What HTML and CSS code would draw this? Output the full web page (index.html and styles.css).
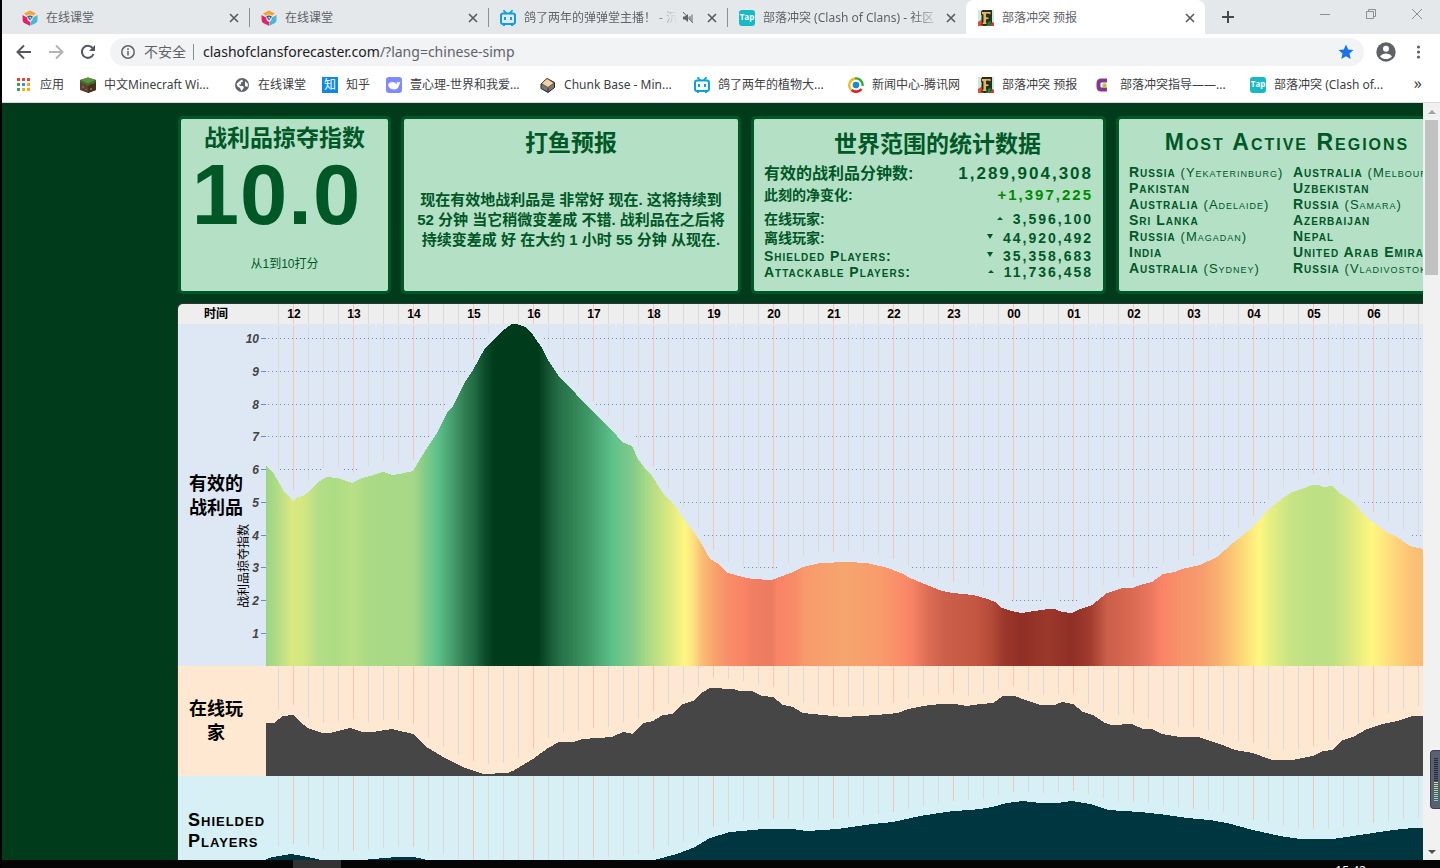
FILE: index.html
```html
<!DOCTYPE html>
<html lang="zh-CN">
<head>
<meta charset="utf-8">
<title>部落冲突 预报</title>
<link rel="stylesheet" href="styles.css">
</head>
<body>
<svg class="sprites" aria-hidden="true">
  <symbol id="cube" viewBox="0 0 16 16">
    <path d="M2 3.5 8 0.5l6 3-2.8 2L8 4.3 4.8 5.7z" fill="#f9a12b"/>
    <path d="M0.5 5 5 7.5l.8 3L8 12v3.8L2.200 13Q.6 12 .6 10z" fill="#ea1f63"/>
    <path d="M15.500 5 11 7.500l-.8 3L8.300 12v3.800L14 13q1.500-1 1.500-3z" fill="#4db5d8"/>
    <path d="M5 6.500 8 5.300l3 1.200L8 10.500z" fill="#37678c"/>
    <path d="M7.200 7.200h2L8.200 9z" fill="#fff"/>
  </symbol>
  <symbol id="bili" viewBox="0 0 16 16">
    <path d="M4 .8 6 3M12 .8 10 3" stroke="#0aa1dc" stroke-width="1.800" stroke-linecap="round"/>
    <rect x="1" y="3.500" width="14" height="10.500" rx="2" fill="none" stroke="#0aa1dc" stroke-width="2"/>
    <path d="M5 7v3M11 7v3" stroke="#0aa1dc" stroke-width="2"/>
    <path d="M3 15.500h2M11 15.500h2" stroke="#0aa1dc"/>
  </symbol>
  <symbol id="forecast" viewBox="0 0 16 16">
    <rect width="16" height="16" fill="#cfe6e2"/>
    <path d="M4 0h10v16H3z" fill="#123b25"/>
    <path d="M0 12l3-2 2 6H0z" fill="#e2492f"/>
    <path d="M12 16l2-4 2 1v3z" fill="#d8382a"/>
    <path d="M10 12l3-1-1 5H8z" fill="#1b8a3c"/>
    <path d="M3.500 1.500H13V5L10.500 4H8.500v3H11v2.500H8.500v3l1 2H3.500L5 12V4.500L3.500 5z" fill="#e9b45b" stroke="#1d1b10" stroke-width=".8"/>
  </symbol>
</svg>

<header class="browser">
  <div class="tabs">
    <div class="tab"><svg class="fav"><use href="#cube"/></svg><span class="tab-title">在线课堂</span><button class="close" aria-label="关闭"><svg viewBox="0 0 10 10"><path d="M1 1l8 8M9 1l-8 8"/></svg></button></div>
    <div class="tab"><svg class="fav"><use href="#cube"/></svg><span class="tab-title">在线课堂</span><button class="close" aria-label="关闭"><svg viewBox="0 0 10 10"><path d="M1 1l8 8M9 1l-8 8"/></svg></button></div>
    <div class="tab"><svg class="fav"><use href="#bili"/></svg><span class="tab-title fade">鸽了两年的弹弹堂主播！ - 沉</span><svg class="mute" viewBox="0 0 12 12"><path d="M1 4.500h2L6 2v8L3 7.500H1z" fill="#5f6368"/><path d="M1 0l10 11M8 4v4M10 2.500v7" stroke="#5f6368" fill="none"/></svg><button class="close" aria-label="关闭"><svg viewBox="0 0 10 10"><path d="M1 1l8 8M9 1l-8 8"/></svg></button></div>
    <div class="tab"><span class="fav tap">Tap</span><span class="tab-title fade">部落冲突 (Clash of Clans) - 社区</span><button class="close" aria-label="关闭"><svg viewBox="0 0 10 10"><path d="M1 1l8 8M9 1l-8 8"/></svg></button></div>
    <div class="tab active"><svg class="fav"><use href="#forecast"/></svg><span class="tab-title">部落冲突 预报</span><button class="close" aria-label="关闭"><svg viewBox="0 0 10 10"><path d="M1 1l8 8M9 1l-8 8"/></svg></button></div>
    <button class="new-tab" aria-label="新标签页"><svg viewBox="0 0 12 12"><path d="M6 0v12M0 6h12"/></svg></button>
    <div class="window-buttons">
      <button aria-label="最小化"><svg viewBox="0 0 12 12"><path d="M1 6.500h10"/></svg></button>
      <button aria-label="还原"><svg viewBox="0 0 12 12"><path d="M1.500 3.500h7v7h-7zM3.500 3.500v-2h7v7h-2"/></svg></button>
      <button aria-label="关闭窗口"><svg viewBox="0 0 12 12"><path d="M1 1l10 10M11 1L1 11"/></svg></button>
    </div>
  </div>

  <div class="toolbar">
    <button class="nav" aria-label="后退"><svg viewBox="0 0 16 16"><path d="M15 8H2M8 1.500 1.500 8 8 14.500"/></svg></button>
    <button class="nav off" aria-label="前进"><svg viewBox="0 0 16 16"><path d="M1 8h13M8 1.500 14.500 8 8 14.500"/></svg></button>
    <button class="nav" aria-label="刷新"><svg viewBox="0 0 16 16"><path d="M13.500 10A6 6 0 1 1 12.500 4"/><path d="M15 1v6H9z" class="solid"/></svg></button>
    <div class="address">
      <svg class="info" viewBox="0 0 14 14"><circle cx="7" cy="7" r="6.200"/><path d="M7 6v4.500M7 3.300v1.600"/></svg>
      <span class="insecure">不安全</span>
      <span class="url">clashofclansforecaster.com<span>/?lang=chinese-simp</span></span>
      <svg class="star" viewBox="0 0 16 16"><path d="M8 .5l2.200 5 5.300.5-4 3.600 1.200 5.400L8 12.200 3.300 15l1.200-5.400-4-3.600 5.300-.5z" fill="#1a73e8"/></svg>
    </div>
    <svg class="profile" viewBox="0 0 20 20"><circle cx="10" cy="10" r="9.700" fill="#5f6368"/><circle cx="10" cy="6.800" r="3" fill="#fff"/><path d="M4 14.200Q6 11.500 10 11.500t6 2.700Q14 17 10 17t-6-2.800z" fill="#fff"/></svg>
    <svg class="menu" viewBox="0 0 4 16"><circle cx="2" cy="3" r="1.600"/><circle cx="2" cy="8" r="1.600"/><circle cx="2" cy="13" r="1.600"/></svg>
  </div>

  <nav class="bookmarks">
    <a href="#"><svg class="fav" viewBox="0 0 16 16"><path d="M1 1h3v3H1zM6 1h3v3H6zM11 1h3v3h-3z" fill="#ea4335"/><path d="M1 6h3v3H1zM1 11h3v3H1z" fill="#34a853"/><path d="M6 6h3v3H6z" fill="#4285f4"/><path d="M11 6h3v3h-3zM6 11h3v3H6zM11 11h3v3h-3z" fill="#fbab05"/></svg><span>应用</span></a>
    <a href="#"><svg class="fav" viewBox="0 0 16 16"><path d="M0 3 8 .5 16 3v10l-8 3-8-3z" fill="#5d4030"/><path d="M8 6v10l8-3V3z" fill="#48301f"/><path d="M0 3 8 .5 16 3 8 6.500z" fill="#5c9440"/><path d="M0 3l8 3.500L16 3v2l-2 1v1l-3 0-3 2-3-2-2 0v-1L0 5z" fill="#3f702c"/><path d="M2 9h2v2H2zM5 12h2v1H5zM10 11h2v2h-2z" fill="#80604a"/></svg><span class="long">中文Minecraft Wi...</span></a>
    <a href="#"><svg class="fav" viewBox="0 0 16 16"><circle cx="8" cy="8" r="7" fill="#5f6368"/><path d="M2.500 7 5 4.500 8 2.500l1 2-2 1v2H5l1 1.500h3l1 1.500L7.500 14 6 11 3.500 9.500zM11 4l3 3-.5 3-2.500-1z" fill="#fff"/></svg><span>在线课堂</span></a>
    <a href="#"><span class="fav zhi">知</span><span>知乎</span></a>
    <a href="#"><svg class="fav" viewBox="0 0 16 16"><rect width="16" height="16" rx="3" fill="#7d8cfa"/><path d="M2 8q1-3 4.500-3 3 0 5 2.500l-1-3 2 1 2-1-1.500 4Q12 12.500 8 12.500 3 12 2 8z" fill="#fff"/></svg><span class="long">壹心理-世界和我爱...</span></a>
    <a href="#"><svg class="fav" viewBox="0 0 16 16"><path d="M1 7 7 1.500l7.500 4v5L8 15.500 1 11.500z" fill="#777" stroke="#222"/><path d="M1.500 6.500 7 1.500l7 4.500-6 4.500z" fill="#f5cfa6" stroke="#4b392b" stroke-width=".7"/><path d="M8 11v4" stroke="#333"/></svg><span class="long">Chunk Base - Min...</span></a>
    <a href="#"><svg class="fav"><use href="#bili"/></svg><span class="long">鸽了两年的植物大...</span></a>
    <a href="#"><svg class="fav" viewBox="0 0 16 16"><circle cx="8" cy="8" r="3.300" fill="#1c8ad2"/><path d="M7 1.500A6.500 6.500 0 0 1 14.500 9" fill="none" stroke="#35a83a" stroke-width="2.400"/><path d="M13.500 12A7 7 0 0 1 3.500 13" fill="none" stroke="#e0202a" stroke-width="2.800"/><path d="M3 13A7 7 0 0 1 7 1.500" fill="none" stroke="#f4bd16" stroke-width="2.400"/></svg><span class="news">新闻中心-腾讯网</span></a>
    <a href="#"><svg class="fav"><use href="#forecast"/></svg><span class="mid">部落冲突 预报</span></a>
    <a href="#"><svg class="fav" viewBox="0 0 16 16"><path d="M11 3.500H5.500q-3 0-3 3v3q0 3 3 3H11" fill="none" stroke="#86368c" stroke-width="4"/><circle cx="8.500" cy="8.500" r="2.200" fill="#b5c736"/></svg><span class="long">部落冲突指导——...</span></a>
    <a href="#"><span class="fav tap">Tap</span><span class="long">部落冲突 (Clash of...</span></a>
    <button class="more" aria-label="更多书签">»</button>
  </nav>
</header>

<div class="viewport">
  <main class="page">
    <section class="cards">
      <article class="card score">
        <h2>战利品掠夺指数</h2>
        <p class="big">10.0</p>
        <p class="note">从1到10打分</p>
      </article>
      <article class="card forecast">
        <h2>打鱼预报</h2>
        <p>现在有效地战利品是 非常好 现在. 这将持续到 52 分钟 当它稍微变差成 不错. 战利品在之后将持续变差成 好 在大约 1 小时 55 分钟 从现在.</p>
      </article>
      <article class="card stats">
        <h2>世界范围的统计数据</h2>
        <table>
          <tr class="total"><th>有效的战利品分钟数:</th><td>1,289,904,308</td></tr>
          <tr class="net"><th>此刻的净变化:</th><td>+1,397,225</td></tr>
          <tr class="cjk"><th>在线玩家:</th><td><i class="up"></i>3,596,100</td></tr>
          <tr class="cjk"><th>离线玩家:</th><td><i class="down"></i>44,920,492</td></tr>
          <tr class="caps"><th>Shielded Players:</th><td><i class="down"></i>35,358,683</td></tr>
          <tr class="caps"><th>Attackable Players:</th><td><i class="up"></i>11,736,458</td></tr>
        </table>
      </article>
      <article class="card regions">
        <h2>Most Active Regions</h2>
        <div class="region-lists">
          <ul>
            <li>Russia <small>(Yekaterinburg)</small></li>
            <li>Pakistan</li>
            <li>Australia <small>(Adelaide)</small></li>
            <li>Sri Lanka</li>
            <li>Russia <small>(Magadan)</small></li>
            <li>India</li>
            <li>Australia <small>(Sydney)</small></li>
          </ul>
          <ul>
            <li>Australia <small>(Melbourne)</small></li>
            <li>Uzbekistan</li>
            <li>Russia <small>(Samara)</small></li>
            <li>Azerbaijan</li>
            <li>Nepal</li>
            <li>United Arab Emirates</li>
            <li>Russia <small>(Vladivostok)</small></li>
          </ul>
        </div>
      </article>
    </section>

    <section class="timeline">
      <div class="row hours"><h3>时间</h3><svg class="plot" id="hours"></svg></div>
      <div class="row loot"><h3>有效的战利品</h3><svg class="plot" id="loot"></svg></div>
      <div class="row online"><h3>在线玩家</h3><svg class="plot" id="online"></svg></div>
      <div class="row shielded"><h3>Shielded Players</h3><svg class="plot" id="shielded"></svg></div>
    </section>
  </main>
  <div class="scrollbar" aria-hidden="true"><i class="arrow-up"></i><i class="thumb"></i><i class="arrow-down"></i></div>
</div>

<footer class="taskbar"><span class="task"></span><time>15:42</time></footer>
<div class="meter" aria-hidden="true"><i></i></div>
<script src="charts.js"></script>
</body>
</html>
```

FILE: styles.css
```css
* { box-sizing: border-box; }
body {
  margin: 0;
  height: 100vh;
  display: flex;
  flex-direction: column;
  overflow: hidden;
  border-left: 2px solid #000;
  background: #000;
  font-family: "Liberation Sans", "Noto Sans CJK SC", sans-serif;
}
h2, h3, p, ul { margin: 0; padding: 0; }
ul { list-style: none; }
button { border: 0; padding: 0; background: none; display: grid; place-items: center; }
.sprites { display: none; }

/* browser frame */
.browser {
  flex: none;
  background: #fff;
  border-bottom: 1px solid #d6d8da;
  font: 12px/16px "Noto Sans", "Noto Sans CJK SC", sans-serif;
  color: #3c4043;
}
.tabs { display: flex; height: 34px; padding-left: 8px; background: #e5e8eb; }
.tab {
  position: relative;
  flex: 0 1 239px;
  min-width: 0;
  display: flex;
  align-items: center;
  padding: 1px 7px 0 12px;
  color: #5f6368;
}
.tab:not(.active)::after {
  content: "";
  position: absolute;
  right: -1px;
  top: 8px;
  height: 19px;
  border-right: 1px solid #8b8f94;
}
.tab:nth-child(4)::after { display: none; }
.tab.active { background: #fff; border-radius: 8px 8px 0 0; }
.fav { flex: none; width: 16px; height: 16px; margin-right: 8px; }
.tap {
  border-radius: 3px;
  background: #17b9c6;
  color: #fff;
  font: bold 8px/14px "Open Sans", sans-serif;
  text-align: center;
}
.zhi { background: #0f88eb; color: #fff; text-align: center; }
.tab-title { flex: 1; overflow: hidden; white-space: nowrap; }
.fade { -webkit-mask-image: linear-gradient(to left, transparent, #000 24px); mask-image: linear-gradient(to left, transparent, #000 24px); }
.mute { flex: none; width: 12px; height: 12px; margin: 0 6px 0 5px; }
.close { flex: none; width: 16px; height: 16px; margin-left: 4px; }
.close svg { width: 10px; height: 10px; stroke: #55595e; stroke-width: 1.6; }
.new-tab { width: 28px; margin-left: 9px; }
.new-tab svg { width: 12px; height: 12px; stroke: #44484c; stroke-width: 2; }
.window-buttons { display: flex; margin-left: auto; }
.window-buttons button { width: 46px; height: 28px; }
.window-buttons svg { width: 12px; height: 12px; fill: none; stroke: #8b8f94; }

.toolbar { display: flex; align-items: center; height: 36px; padding: 0 19px 0 14px; }
.nav { width: 16px; height: 16px; margin-right: 16px; }
.nav svg { width: 16px; height: 16px; fill: none; stroke: #54585d; stroke-width: 2; }
.nav .solid { fill: #54585d; stroke: none; }
.nav.off { opacity: .45; }
.address {
  flex: 1;
  display: flex;
  align-items: center;
  height: 28px;
  padding: 0 10px;
  border-radius: 14px;
  background: #f1f3f4;
  font-size: 14px;
}
.nav + .address { margin-left: -2px; }
.info { width: 14px; height: 14px; margin: 0 9px 0 1px; fill: none; stroke: #5f6368; stroke-width: 1.5; }
.insecure { padding-right: 7px; border-right: 1px solid #8b8f94; color: #5f6368; }
.url { flex: 1; margin-left: 9px; color: #202124; }
.url span { color: #5f6368; }
.star { width: 16px; height: 16px; }
.profile { width: 20px; height: 20px; margin: 0 20px 0 12px; }
.menu { width: 5px; height: 16px; fill: #5f6368; }

.bookmarks { display: flex; align-items: center; gap: 16px; height: 32px; padding: 0 18px 2px 14px; overflow: hidden; }
.bookmarks a { flex: none; display: flex; align-items: center; color: #3c4043; text-decoration: none; white-space: nowrap; }
.long { width: 114px; }
.news { width: 90px; }
.mid { width: 78px; }
.more { margin: 0 0 4px auto; font: 16px/16px "Noto Sans", sans-serif; color: #3c4043; }

/* page */
.viewport { flex: 1; min-height: 0; display: flex; }
.page { flex: 1; min-width: 0; overflow: hidden; padding: 13px 0 0 176px; background: #003c1b; }
.cards { display: flex; gap: 10px; height: 178px; }
.card {
  flex: none;
  border: 3px solid #005826;
  border-radius: 5px;
  background: #b4e1c6;
  color: #005826;
  font-weight: bold;
  text-align: center;
}
.card h2 { font-size: 23px; line-height: 30px; }
.score { width: 213px; padding-top: 4px; }
.big { margin: 4px 16px 0 0; font-size: 85px; line-height: 76px; letter-spacing: 1px; }
.note { margin-top: 23px; font-size: 12px; line-height: 16px; font-weight: normal; }
.forecast { width: 340px; padding: 9px 10px 0; }
.forecast p { margin-top: 32px; font-size: 15px; line-height: 20px; }
.stats { width: 355px; padding: 10px 10px 0; }
.stats h2 { padding-left: 18px; }
.stats table { width: 100%; margin-top: 3px; border-collapse: collapse; font-size: 14px; line-height: 16px; }
.stats th { padding: 0; text-align: left; font-variant: small-caps; white-space: nowrap; }
.stats td { padding: 0; text-align: right; letter-spacing: 2px; }
.stats .total th { font-size: 16px; line-height: 24px; }
.stats .total td { font-size: 17px; }
.stats .net { line-height: 18px; }
.stats .net th, .stats .net td { padding-bottom: 6px; }
.stats .net td { color: #008a00; font-size: 15px; }
.stats .cjk { line-height: 19px; }
.stats .caps th { letter-spacing: 1px; }
.up, .down { display: inline-block; margin-right: 10px; vertical-align: 4px; border: 3px solid transparent; }
.up { border-top: 0; border-bottom: 3px solid #005826; }
.down { border-bottom: 0; border-top: 5px solid #005826; }
.regions { width: 342px; padding: 8px 10px 0; }
.regions h2 { font-variant: small-caps; letter-spacing: 2px; }
.region-lists { display: flex; margin-top: 7px; text-align: left; font-size: 14px; line-height: 16px; font-variant: small-caps; letter-spacing: 1px; white-space: nowrap; }
.region-lists ul { flex: 0 0 164px; }
.region-lists small { font-size: 13px; line-height: 0; font-weight: normal; }

/* timeline */
.timeline { margin: 9px 0 0 -1px; border: solid #333; border-width: 1px 0 0 1px; border-radius: 6px 0 0 0; overflow: hidden; }
.row { display: grid; grid-template: 100% / 88px 1fr; }
.row h3 { position: relative; z-index: 1; align-self: center; padding: 0 22px 0 10px; font-size: 18px; line-height: 24px; text-align: center; color: #000; }
.plot { width: 100%; height: 100%; overflow: visible; }
.hours { height: 20px; background: #eee; }
.row.hours h3 { font-size: 12px; line-height: 20px; }
.loot { height: 342px; background: #dee8f5; }
.loot h3 { padding-top: 2px; }
.online { height: 110px; background: #ffe8d1; }
.shielded { height: 110px; background: #d6f0f5; }
.row.shielded h3 { line-height: 21px; font-variant: small-caps; letter-spacing: 1px; }
.quarter { fill: #dadada; }
.online .quarter { fill: #dadadc; }
.hour { fill: #f8c4b6; }
.dot, .tick { fill: #6c8cc8; }
.hour-label { font: bold 12px "Liberation Sans", sans-serif; text-anchor: middle; }
.axis-label { font: italic bold 12px "Liberation Sans", sans-serif; text-anchor: end; fill: #444; }
.axis-title { font: 12px "Noto Sans CJK SC", sans-serif; text-anchor: middle; }

.scrollbar { flex: none; width: 17px; display: flex; flex-direction: column; align-items: center; padding: 7px 0 6px; background: #f1f1f1; }
.arrow-up { border: 4px solid transparent; border-top: 0; border-bottom-color: #a3a3a3; }
.thumb { width: 13px; height: 155px; margin-top: 6px; background: #c1c1c1; }
.arrow-down { margin-top: auto; border: 4px solid transparent; border-bottom: 0; border-top-color: #505050; }

.taskbar { flex: none; display: flex; height: 8px; padding: 0 74px 0 291px; overflow: hidden; background: #050505; }
.task { width: 48px; background: #333; }
time { margin: 4px 0 0 auto; font: 12px/14px "Noto Sans", sans-serif; color: #fff; }

/* floating level meter at the window edge */
.meter {
  position: absolute;
  right: 0;
  top: 750px;
  width: 10px;
  height: 59px;
  padding: 7px 2px 6px 3px;
  border: 1px solid #3b3f50;
  border-right: 0;
  border-radius: 4px 0 0 4px;
  background: #5a6072;
}
.meter i {
  display: block;
  height: 100%;
  background:
    repeating-linear-gradient(transparent 0 1px, #525868 1px 2px),
    linear-gradient(#2b2f3d 0 52%, #cdea8e 53%, #9be39a 75%, #63e0cf);
}
```

FILE: charts.js
```js
const NS = 'http://www.w3.org/2000/svg';
const LEFT = 266;      // where the plots begin
const FIRST = 278;     // first quarter-hour line
const STEP = 15;

const charts = {
  loot: {
    top: 324, height: 342, gap: 11, lineTop: 2, fill: 'url(#heat)',
    points: [266,466,272,471,277,479,283,490,293,501,298,497,303,496,310,491,318,482,327,477,337,478,352,483,362,478,370,476,383,472,392,475,400,474,413,471,420,459,429,445,437,433,447,413,453,406,465,382,473,370,485,348,493,340,505,329,512,324,517,324,525,327,533,335,542,348,548,360,560,378,572,389,580,399,590,409,608,427,613,431,622,442,632,446,638,459,647,471,652,476,663,493,668,499,673,503,685,521,693,531,701,543,710,559,717,563,728,573,743,577,752,579,772,580,777,578,793,572,803,567,820,563,847,562,867,563,888,568,903,574,910,578,927,585,942,591,953,593,973,595,988,599,995,602,1002,608,1011,611,1021,613,1028,612,1048,609,1055,609,1062,612,1072,613,1080,609,1092,605,1107,593,1122,588,1133,588,1140,585,1152,582,1163,574,1175,572,1182,569,1200,565,1217,557,1233,543,1253,527,1270,508,1283,498,1292,492,1305,488,1312,485,1319,485,1323,487,1332,486,1338,492,1353,502,1368,519,1388,533,1397,537,1410,546,1418,548,1423,549]
  },
  online: {
    top: 666, height: 110, gap: 10, lineTop: 0, fill: '#464646',
    points: [266,723,274,723,283,716,293,715,300,722,308,728,322,733,330,733,350,728,362,732,373,732,392,729,413,734,425,746,443,757,465,768,483,774,507,773,513,771,533,759,548,748,559,742,573,742,583,739,612,737,623,732,633,734,643,723,653,721,663,715,672,714,683,704,693,701,703,692,710,688,733,689,740,691,752,691,762,696,773,697,783,705,793,707,803,713,843,717,877,715,898,713,908,709,923,706,940,704,955,704,967,706,980,704,993,703,1003,696,1015,696,1025,700,1040,705,1055,705,1062,702,1073,704,1083,712,1093,715,1105,723,1112,725,1132,724,1143,729,1152,729,1162,734,1180,737,1198,737,1220,744,1235,750,1253,753,1272,760,1292,760,1313,756,1323,751,1332,750,1343,740,1353,737,1367,729,1382,724,1397,721,1412,716,1423,716]
  },
  shielded: {
    top: 776, height: 110, gap: 10, lineTop: 0, fill: '#003640',
    points: [266,859,273,857,291,854,303,856,317,859,330,862,340,862,373,859,397,857,413,857,423,859,443,865,470,872,540,871,600,868,640,864,658,859,677,854,695,847,710,838,730,832,763,829,792,829,807,831,837,829,873,824,893,822,920,816,953,811,970,810,980,809,992,807,1007,803,1023,801,1040,803,1057,803,1072,801,1090,804,1108,810,1140,812,1167,815,1187,818,1210,820,1227,823,1253,830,1280,836,1300,839,1332,839,1353,836,1373,833,1393,830,1413,828,1423,828]
  }
};

const heat = [[266,'#99d585'],[277,'#b0dc86'],[292,'#dbe981'],[303,'#d3e781'],[318,'#b4de85'],[335,'#acdc84'],[352,'#bae085'],[370,'#a9da84'],[413,'#a6d887'],[428,'#79ca88'],[437,'#5ec28b'],[450,'#4aa372'],[465,'#2f7e52'],[475,'#1f6a42'],[485,'#0d4c2a'],[494,'#003c1b'],[538,'#003c1b'],[548,'#155432'],[560,'#277048'],[571,'#2f7f52'],[590,'#419a68'],[613,'#5ec28b'],[632,'#80cb88'],[646,'#a5d986'],[668,'#d8e880'],[685,'#fdf781'],[693,'#fee180'],[702,'#fabd74'],[716,'#f8a06c'],[730,'#f78c68'],[745,'#f98465'],[752,'#f07e61'],[772,'#ec7b60'],[777,'#f98366'],[795,'#f88c68'],[805,'#f89a6b'],[846,'#f6a56e'],[880,'#f89b6b'],[900,'#f98d68'],[912,'#f88366'],[927,'#de6e56'],[945,'#cb5f4a'],[975,'#c45742'],[992,'#b34a38'],[1004,'#9b382b'],[1021,'#902f25'],[1048,'#9a382c'],[1072,'#902f26'],[1091,'#a23d2f'],[1107,'#cb5f4a'],[1132,'#da6a53'],[1150,'#e9765d'],[1160,'#fa8266'],[1181,'#f6936a'],[1200,'#f79a6c'],[1216,'#f8ad70'],[1235,'#fbcb76'],[1259,'#fff780'],[1270,'#e7ef82'],[1290,'#c9e484'],[1313,'#bce084'],[1333,'#bfe084'],[1353,'#deea82'],[1372,'#fff780'],[1388,'#fee07d'],[1410,'#fbc375'],[1423,'#fabc72']];

function add(parent, name, attrs, text) {
  const el = document.createElementNS(NS, name);
  for (const key in attrs) el.setAttribute(key, attrs[key]);
  if (text !== undefined) el.textContent = text;
  parent.appendChild(el);
  return el;
}

function valueAt(points, x) {
  for (let i = 2; i < points.length; i += 2) {
    if (x <= points[i]) {
      const t = (x - points[i - 2]) / (points[i] - points[i - 2]);
      return points[i - 1] + t * (points[i + 1] - points[i - 1]);
    }
  }
  return points[points.length - 1];
}

function gridLines(svg, from, endAt) {
  for (let x = FIRST; x < 1423; x += STEP) {
    const kind = (x - FIRST) % 60 === STEP ? 'hour' : 'quarter';
    add(svg, 'rect', { class: kind, x: x - LEFT, y: from, width: 1, height: Math.max(0, Math.round(endAt(x)) - from) });
  }
}

const hours = document.getElementById('hours');
gridLines(hours, 0, () => 20);
for (let i = 0; i < 19; i++) {
  const label = String((12 + i) % 24).padStart(2, '0');
  add(hours, 'text', { class: 'hour-label', x: 28 + i * 60, y: 14 }, label);
}

const loot = document.getElementById('loot');
const gradient = add(add(loot, 'defs', {}), 'linearGradient', { id: 'heat', gradientUnits: 'userSpaceOnUse', x1: 0, x2: 1157, y1: 0, y2: 0 });
heat.forEach(([x, color]) => add(gradient, 'stop', { offset: (x - LEFT) / 1157, 'stop-color': color }));

for (const id in charts) {
  const c = charts[id];
  const svg = document.getElementById(id);
  gridLines(svg, c.lineTop, x => Math.min(c.height, valueAt(c.points, x) - c.top - c.gap));
  if (id === 'loot') {
    for (let n = 1; n <= 10; n++) {
      const y = Math.floor(342 - n * 32.75);
      add(svg, 'rect', { class: 'tick', x: -5, y, width: 5, height: 1 });
      add(svg, 'text', { class: 'axis-label', x: -7, y: y + 5 }, n);
      for (let x = LEFT + 2; x < 1423; x += 4) {
        if (valueAt(c.points, x) - c.top - y > 10) add(svg, 'rect', { class: 'dot', x: x - LEFT, y, width: 1, height: 1 });
      }
    }
    add(svg, 'text', { class: 'axis-title', transform: 'translate(-18 242) rotate(-90)' }, '战利品掠夺指数');
  }
  let d = `M0 ${c.height}`;
  for (let i = 0; i < c.points.length; i += 2) d += `L${c.points[i] - LEFT} ${c.points[i + 1] - c.top}`;
  add(svg, 'path', { d: d + `V${c.height}z`, fill: c.fill, 'shape-rendering': 'crispEdges' });
}
```
